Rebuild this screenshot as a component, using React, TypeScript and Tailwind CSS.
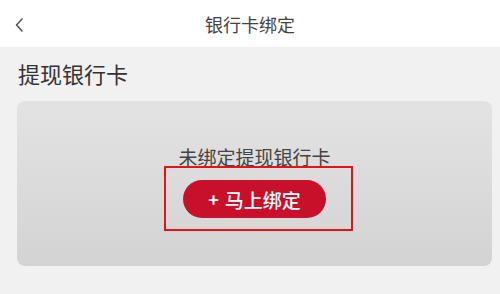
import React from "react";

export default function App() {
  return (
    <div
      className="w-[500px] h-[294px] bg-[#f1f1f1] flex flex-col overflow-hidden"
      style={{ fontFamily: '"Noto Sans CJK SC", "Noto Sans", sans-serif' }}
    >
      <div className="h-[47px] bg-white relative flex items-center justify-center shrink-0">
        <svg
          className="absolute left-[14px] top-[17px]"
          width="10"
          height="16"
          viewBox="0 0 10 16"
          fill="none"
        >
          <path d="M8 2 L2.5 8 L8 14" stroke="#555" strokeWidth="1.6" strokeLinecap="round" strokeLinejoin="round" />
        </svg>
        <span className="text-[18px] text-[#444] leading-none">银行卡绑定</span>
      </div>
      <div className="px-[17px] pt-[15px]">
        <div className="text-[22px] leading-[22px] text-[#333] pl-[1px] h-[24px]">提现银行卡</div>
        <div className="mt-[15px] w-[475px] h-[165px] rounded-[8px] bg-gradient-to-b from-[#e3e3e3] to-[#d3d3d3] flex flex-col items-center pt-[45px]">
          <div className="text-[19px] leading-[22px] text-[#444]">未绑定提现银行卡</div>
          <div className="relative mt-[12px]">
            <div className="absolute left-[-19px] top-[-14px] w-[189px] h-[65px] border-2 border-[#e01515]" />
            <button className="w-[143px] h-[38px] rounded-full bg-[#c8102a] text-white text-[19px] leading-none flex items-center justify-center gap-[6px] font-medium">
              <span className="text-[18px] font-bold">+</span>
              <span>马上绑定</span>
            </button>
          </div>
        </div>
      </div>
    </div>
  );
}
